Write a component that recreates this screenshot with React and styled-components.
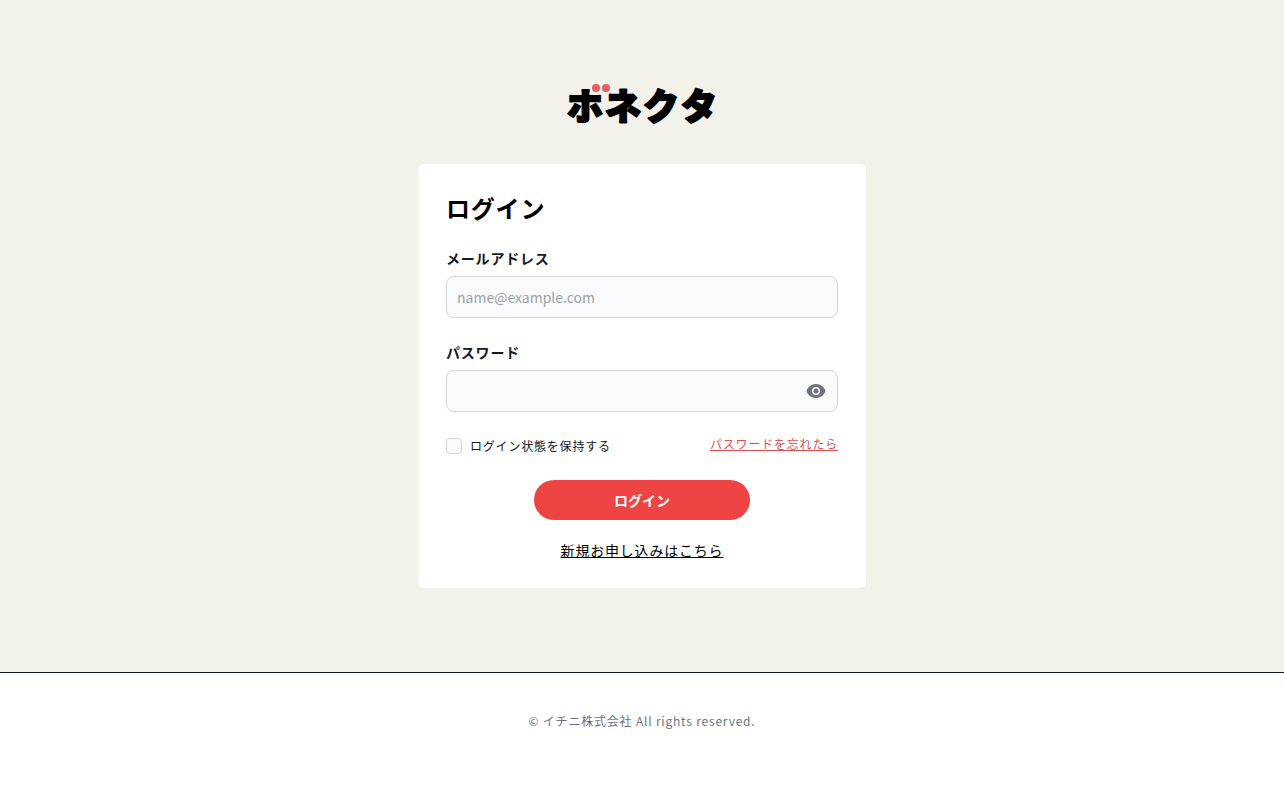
import React, { useState } from 'react';
import styled, { createGlobalStyle } from 'styled-components';

const App = () => {
    const [visible, setVisible] = useState(false);

    return (
        <>
            <GlobalStyle />
            <Main>
                <Logo />
                <Card>
                    <Title>ログイン</Title>
                    <Form onSubmit={e => e.preventDefault()}>
                        <Field>
                            <Label htmlFor="email">メールアドレス</Label>
                            <Input id="email" type="email" placeholder="name@example.com" />
                        </Field>
                        <Field>
                            <Label htmlFor="password">パスワード</Label>
                            <PasswordBox>
                                <Input id="password" type={visible ? 'text' : 'password'} />
                                <EyeButton
                                    type="button"
                                    aria-label="パスワードを表示"
                                    aria-pressed={visible}
                                    onClick={() => setVisible(!visible)}
                                >
                                    <EyeIcon />
                                </EyeButton>
                            </PasswordBox>
                        </Field>
                        <Options>
                            <Remember>
                                <Checkbox id="remember" type="checkbox" />
                                <RememberLabel htmlFor="remember">ログイン状態を保持する</RememberLabel>
                            </Remember>
                            <ForgotLink href="#forgot">パスワードを忘れたら</ForgotLink>
                        </Options>
                        <SubmitButton type="submit">ログイン</SubmitButton>
                    </Form>
                    <SignUpLink href="#signup">新規お申し込みはこちら</SignUpLink>
                </Card>
            </Main>
            <Footer>© イチニ株式会社 All rights reserved.</Footer>
        </>
    );
}

export default App;

// the two red dots stand in for the voiced mark of ボ
const Logo = () => (
    <LogoSvg viewBox="0 0 152 40" role="img" aria-label="ボネクタ">
        <LogoText x="1 39 77 115" y="36">ホネクタ</LogoText>
        <circle cx="30" cy="4" r="4" fill="#e85d60" />
        <circle cx="40" cy="4" r="4" fill="#e85d60" />
    </LogoSvg>
);

const EyeIcon = () => (
    <svg width="20" height="20" viewBox="0 0 20 20" aria-hidden="true">
        <path
            fill="currentColor"
            fillRule="evenodd"
            d="M.5 10C1.7 5.9 5.5 3 10 3s8.300 2.900 9.500 7c-1.200 4.100-5 7-9.500 7S1.700 14.100.5 10zM14 10a4 4 0 1 1-8 0 4 4 0 0 1 8 0z"
        />
        <circle cx="10" cy="10" r="2.500" fill="currentColor" />
    </svg>
);

const GlobalStyle = createGlobalStyle`
    * {
        box-sizing: border-box;
    }
    body {
        margin: 0;
        background: #fff;
        color: #000;
        font-family: "Noto Sans CJK JP", sans-serif;
        font-size: 16px;
        letter-spacing: 0.05em;
    }
`

const Main = styled.main`
    display: flex;
    flex-direction: column;
    align-items: center;
    gap: 40px;
    padding: 84px 16px;
    background: #f2f2ea;
`

const LogoSvg = styled.svg`
    display: block;
    width: 152px;
    height: 40px;
    overflow: visible;
`

const LogoText = styled.text`
    font-size: 36px;
    font-weight: 900;
    letter-spacing: 0;
    fill: #000;
    stroke: #000;
    stroke-width: 2px;
    stroke-linejoin: round;
`

const Card = styled.section`
    display: flex;
    flex-direction: column;
    width: 100%;
    max-width: 448px;
    padding: 28px;
    border-radius: 6px;
    background: #fff;
`

const Title = styled.h1`
    margin: 0 0 24px;
    font-size: 24px;
    font-weight: 700;
    line-height: 32px;
`

const Form = styled.form`
    display: flex;
    flex-direction: column;
    gap: 24px;
`

const Field = styled.div`
    display: flex;
    flex-direction: column;
    gap: 8px;
`

const Label = styled.label`
    color: #111827;
    font-size: 14px;
    font-weight: 700;
    line-height: 20px;
`

const Input = styled.input`
    width: 100%;
    height: 42px;
    padding: 10px;
    border: 1px solid #d1d5db;
    border-radius: 8px;
    background: #f9fafb;
    color: #111827;
    font-family: inherit;
    font-size: 14px;
    line-height: 20px;

    &::placeholder {
        color: #9ca3af;
    }
`

const PasswordBox = styled.div`
    position: relative;
`

const EyeButton = styled.button`
    position: absolute;
    top: 0;
    right: 0;
    display: flex;
    align-items: center;
    height: 100%;
    padding: 0 12px;
    border: 0;
    background: none;
    color: #6b7280;
    cursor: pointer;
`

const Options = styled.div`
    display: flex;
    justify-content: space-between;
    align-items: flex-start;
`

const Remember = styled.div`
    display: flex;
    align-items: center;
    gap: 8px;
    height: 20px;
`

const Checkbox = styled.input`
    appearance: none;
    width: 16px;
    height: 16px;
    margin: 0;
    border: 1px solid #d1d5db;
    border-radius: 4px;
    background: #f9fafb;

    &:checked {
        border-color: #ef4444;
        background: #ef4444;
    }
`

const RememberLabel = styled.label`
    color: #111827;
    font-size: 12px;
    line-height: 16px;
`

const ForgotLink = styled.a`
    color: #e04f4f;
    font-size: 12px;
    line-height: 16px;
`

const SubmitButton = styled.button`
    align-self: center;
    width: 216px;
    height: 40px;
    border: 0;
    border-radius: 20px;
    background: #ef4444;
    color: #fff;
    font-family: inherit;
    font-size: 14px;
    font-weight: 700;
    line-height: 20px;
    cursor: pointer;
`

const SignUpLink = styled.a`
    align-self: center;
    margin-top: 20px;
    color: #000;
    font-size: 14px;
    line-height: 20px;
`

const Footer = styled.footer`
    padding: 40px 16px;
    border-top: 1px solid #111827;
    color: #6b7280;
    font-size: 12px;
    line-height: 16px;
    text-align: center;
`
